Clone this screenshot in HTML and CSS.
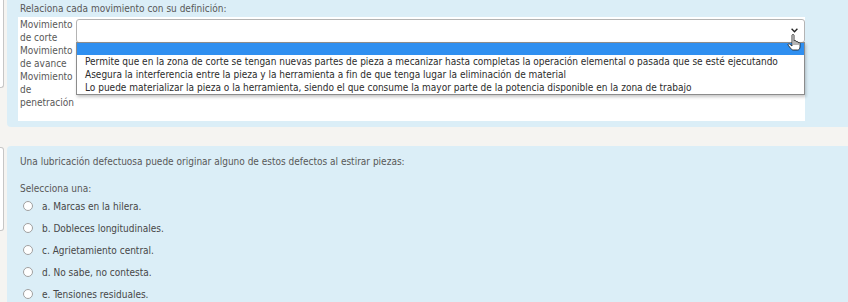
FILE: index.html
```html
<!DOCTYPE html>
<html lang="es">
<head>
<meta charset="utf-8">
<title>Cuestionario</title>
<link rel="stylesheet" href="styles.css">
</head>
<body>
<div class="que">
  <div class="info info-1"></div>
  <div class="content content-1">
    <div class="qtext">Relaciona cada movimiento con su definición:</div>
    <div class="answer-wrap">
      <table class="answer">
        <tr>
          <td class="label">Movimiento<br>de corte</td>
          <td class="control">
            <div class="select open">
              <svg class="chev" width="7" height="5" viewBox="0 0 7 5"><polyline points="0.6,0.8 3.5,3.8 6.4,0.8" fill="none" stroke="#222" stroke-width="1.3"/></svg>
              <div class="dropdown">
                <div class="opt hl"></div>
                <div class="opt">Permite que en la zona de corte se tengan nuevas partes de pieza a mecanizar hasta completas la operación elemental o pasada que se esté ejecutando</div>
                <div class="opt">Asegura la interferencia entre la pieza y la herramienta a fin de que tenga lugar la eliminación de material</div>
                <div class="opt">Lo puede materializar la pieza o la herramienta, siendo el que consume la mayor parte de la potencia disponible en la zona de trabajo</div>
              </div>
              <svg class="cursor" width="14" height="17" viewBox="0 0 14 17"><path d="M5 1.2C5 0.3 7 0.3 7 1.2V7C7 6.3 9 6.3 9 7V8C9 7.3 11 7.3 11 8V9C11 8.4 13 8.4 13 9.2V12.8C13 14.8 12 16 10.6 16H6.2C5.2 16 4.4 15.3 3.6 14.3L1.2 11.2C0.6 10.3 1.6 9.3 2.6 10.1L5 12Z" fill="#fff" stroke="#2a2a2a" stroke-width="0.9" stroke-linejoin="round"/><path d="M7 7V11M9 8V11M11 9V11" stroke="#2a2a2a" stroke-width="0.7"/></svg>
            </div>
          </td>
        </tr>
        <tr>
          <td class="label">Movimiento<br>de avance</td>
          <td class="control"><div class="select"></div></td>
        </tr>
        <tr>
          <td class="label">Movimiento<br>de<br>penetración</td>
          <td class="control"><div class="select"></div></td>
        </tr>
      </table>
    </div>
  </div>
</div>

<div class="que que-2">
  <div class="info info-2"></div>
  <div class="content content-2">
    <div class="qtext qtext-2">Una lubricación defectuosa puede originar alguno de estos defectos al estirar piezas:</div>
    <div class="prompt">Selecciona una:</div>
    <div class="choices">
      <div class="choice"><span class="radio"></span><span>a. Marcas en la hilera.</span></div>
      <div class="choice"><span class="radio"></span><span>b. Dobleces longitudinales.</span></div>
      <div class="choice"><span class="radio"></span><span>c. Agrietamiento central.</span></div>
      <div class="choice"><span class="radio"></span><span>d. No sabe, no contesta.</span></div>
      <div class="choice"><span class="radio"></span><span>e. Tensiones residuales.</span></div>
    </div>
  </div>
</div>
</body>
</html>
```

FILE: styles.css
```css
* { box-sizing: border-box; }
html, body { margin: 0; padding: 0; }
body {
  background: #f5f4f1;
  font-family: "DejaVu Sans Condensed", "DejaVu Sans", sans-serif;
  font-size: 10px;
  color: #585858;
  width: 848px;
  height: 302px;
  overflow: hidden;
}
.que { display: flex; align-items: flex-start; }
.info {
  flex: none;
  width: 4px;
  background: #fff;
  border: 1px solid #c6c6c6;
  border-left: 0;
  border-radius: 0 3px 3px 0;
  margin-right: 3px;
}
.info-1 { height: 88px; border-top: 0; border-radius: 0 0 3px 0; }
.info-2 { height: 84px; margin-top: 1px; }
.content { flex: 1; background: #dbeef7; }
.content-1 {
  height: 127px;
  padding: 2px 0 0 13px;
  border-radius: 0 0 0 4px;
}
.que-2 { margin-top: 19px; }
.content-2 {
  height: 156px;
  overflow: hidden;
  padding: 9px 0 0 13px;
  border-radius: 4px 0 0 0;
}
.qtext { line-height: 13px; }
.content-1 .qtext { margin-bottom: 2px; }
.answer-wrap {
  display: inline-block;
  background: #fff;
  margin-left: -2px;
  padding: 1px 0 12px;
}
.answer { border-collapse: collapse; }
.answer td { padding: 0; vertical-align: top; }
.label {
  width: 58px;
  padding-left: 2px !important;
  line-height: 13px;
  white-space: nowrap;
}
.select {
  position: relative;
  width: 729px;
  height: 24px;
  margin-top: 1px;
  background: #fff;
  border: 1px solid #b4b4b4;
  border-radius: 3px;
}
.chev { position: absolute; right: 6px; top: 8px; }
.dropdown {
  position: absolute;
  z-index: 5;
  top: 22px;
  left: -1px;
  width: 729px;
  background: #fff;
  border: 1px solid #8c8c8c;
  box-shadow: 1px 2px 3px rgba(0, 0, 0, 0.22);
}
.opt {
  height: 13px;
  line-height: 13px;
  padding-left: 8px;
  color: #2c2c2c;
  white-space: nowrap;
}
.opt.hl { height: 12px; background: #2f8ff0; }
.cursor { position: absolute; z-index: 6; right: 3px; top: 14px; }
.qtext-2 { margin-bottom: 14px; }
.prompt { line-height: 13px; }
.choice {
  display: flex;
  align-items: center;
  gap: 9px;
  height: 22px;
  padding-left: 3px;
  color: #474747;
}
.radio {
  flex: none;
  width: 10px;
  height: 10px;
  border: 1px solid #a0a0a0;
  border-radius: 50%;
  background: #fff;
}
```
